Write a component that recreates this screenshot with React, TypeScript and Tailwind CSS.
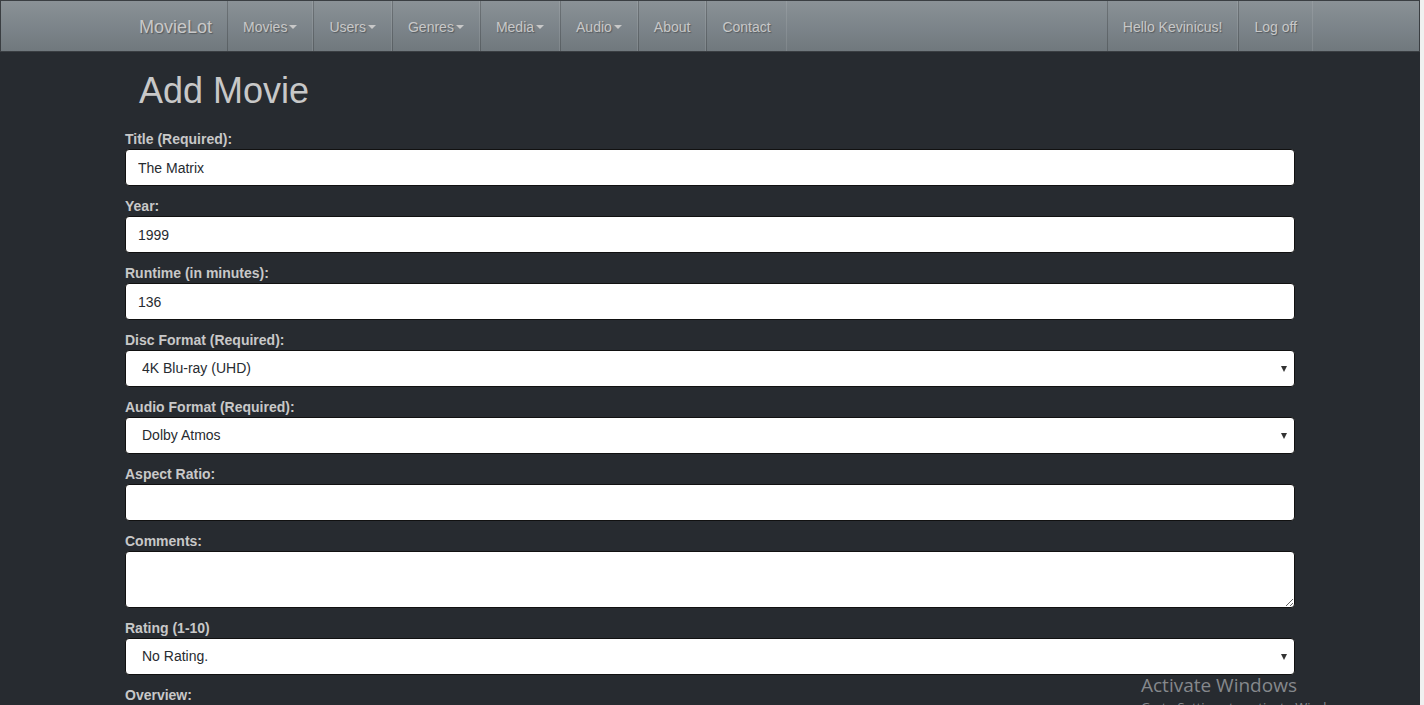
const leftNav = [
  { label: "Movies", caret: true },
  { label: "Users", caret: true },
  { label: "Genres", caret: true },
  { label: "Media", caret: true },
  { label: "Audio", caret: true },
  { label: "About", caret: false },
  { label: "Contact", caret: false },
];

const Caret = () => (
  <span className="ml-[2px] inline-block h-0 w-0 border-x-[4px] border-t-[4px] border-x-transparent border-t-[#c8c8c8] align-middle" />
);

const NavItem: React.FC<{ label: string; caret?: boolean }> = ({ label, caret }) => (
  <a className="flex h-[50px] items-center border-l border-r border-l-black/20 border-r-white/10 px-[15px] pt-[2px] text-[14px] text-[#c8c8c8] [text-shadow:1px_1px_1px_rgba(0,0,0,0.3)]">
    {label}
    {caret && <Caret />}
  </a>
);

const Label: React.FC<{ children: React.ReactNode }> = ({ children }) => (
  <label className="block h-[20px] text-[14px] font-bold leading-[20px] text-[#c8c8c8]">{children}</label>
);

const inputCls =
  "block w-full rounded-[4px] border border-[#111] bg-white text-[14px] text-[#272b30] outline-none";

const TextField: React.FC<{ label: string; value?: string }> = ({ label, value }) => (
  <div className="mb-[10px]">
    <Label>{label}</Label>
    <input readOnly value={value ?? ""} className={`${inputCls} h-[37px] px-[12px]`} />
  </div>
);

const SelectField: React.FC<{ label: string; value: string }> = ({ label, value }) => (
  <div className="mb-[10px]">
    <Label>{label}</Label>
    <div className="relative">
      <select defaultValue={value} className={`${inputCls} h-[37px] appearance-none pl-[16px]`}>
        <option>{value}</option>
      </select>
      <span className="pointer-events-none absolute right-[8px] top-[16px] h-0 w-0 border-x-[3.5px] border-t-[6px] border-x-transparent border-t-[#333]" />
    </div>
  </div>
);

export default function App() {
  return (
    <div className="flex h-[705px] overflow-hidden bg-[#272b30] font-['Liberation_Sans',Arial,sans-serif]">
      <div className="relative w-[1420px]">
        <nav className="h-[52px] border border-[#3a3e42] bg-[linear-gradient(#8a9196,#7a8288_60%,#70787d)]">
          <div className="mx-auto flex w-[1170px]">
            <a className="flex h-[50px] items-center pl-[14px] pr-[15px] pt-[2px] text-[18px] text-[#c8c8c8] [text-shadow:1px_1px_1px_rgba(0,0,0,0.3)]">
              MovieLot
            </a>
            <div className="flex">
              {leftNav.map((n) => (
                <NavItem key={n.label} label={n.label} caret={n.caret} />
              ))}
            </div>
            <div className="-mr-[18px] ml-auto flex">
              <NavItem label="Hello Kevinicus!" />
              <NavItem label="Log off" />
            </div>
          </div>
        </nav>

        <main className="mx-auto w-[1170px]">
          <h2 className="mb-[18px] mt-[19px] pl-[14px] text-[36px] leading-[40px] text-[#c8c8c8]">Add Movie</h2>
          <form>
            <TextField label="Title (Required):" value="The Matrix" />
            <TextField label="Year:" value="1999" />
            <TextField label="Runtime (in minutes):" value="136" />
            <SelectField label="Disc Format (Required):" value="4K Blu-ray (UHD)" />
            <SelectField label="Audio Format (Required):" value="Dolby Atmos" />
            <TextField label="Aspect Ratio:" />
            <div className="mb-[10px]">
              <Label>Comments:</Label>
              <textarea readOnly className={`${inputCls} h-[57px] px-[12px] py-[6px]`} />
            </div>
            <SelectField label="Rating (1-10)" value="No Rating." />
            <Label>Overview:</Label>
          </form>
        </main>

        <div className="pointer-events-none absolute left-[1141px] top-[672px] font-['Open_Sans','Noto_Sans',sans-serif] text-[#85888c]">
          <div className="text-[19px] leading-[26px]">Activate Windows</div>
          <div className="text-[13px] leading-[18px]">Go to Settings to activate Windows.</div>
        </div>
      </div>
      <div className="flex-1 bg-[#f0f0f0]" />
    </div>
  );
}
